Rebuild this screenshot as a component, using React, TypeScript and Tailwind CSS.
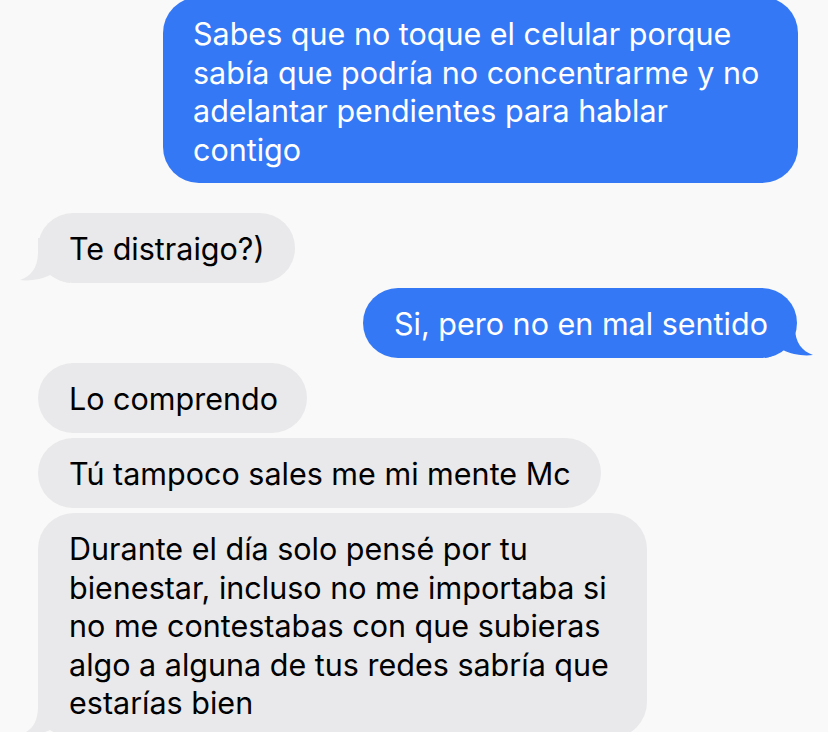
import React from "react";

const font = { fontFamily: "Inter, 'Noto Sans', sans-serif" };

function TailLeft({ color }: { color: string }) {
  return (
    <svg
      className="absolute left-[-18px] bottom-0"
      width="50"
      height="45"
      viewBox="0 0 50 45"
      aria-hidden="true"
    >
      <path
        d="M18 0 L18 14 C18 30 11 38 0 42 C10 43.5 22 41 30 37 C36 41 42 44 50 45 L50 0 Z"
        fill={color}
      />
    </svg>
  );
}

function TailRight({ color }: { color: string }) {
  return (
    <svg
      className="absolute right-[-16px] bottom-0"
      width="48"
      height="45"
      viewBox="0 0 48 45"
      aria-hidden="true"
    >
      <path
        d="M30 0 L30 14 C30 30 37 38 48 42 C38 43.5 26 41 18 37 C12 41 6 44 0 45 L0 0 Z"
        fill={color}
      />
    </svg>
  );
}

export default function App() {
  return (
    <div
      className="w-[828px] h-[732px] overflow-hidden bg-[#f9f9f9] text-[30.5px] leading-[38.5px]"
      style={font}
    >
      <div className="flex flex-col -mt-[3px]">
        {/* Blue multi-line */}
        <div className="flex justify-end pr-[30px]">
          <div className="relative w-[635px] rounded-[36px] bg-[#3478f6] pt-[18px] pb-[14px] pl-[30px] pr-[20px] text-white">
            Sabes que no toque el celular porque
            <br />
            sabía que podría no concentrarme y no
            <br />
            adelantar pendientes para hablar
            <br />
            contigo
          </div>
        </div>

        {/* Gray Te distraigo */}
        <div className="mt-[30px] flex pl-[38px]">
          <div className="relative w-[257px] rounded-[35px] bg-[#e9e9eb] pt-[17px] pb-[15px] pl-[31px] leading-[38px] text-black whitespace-nowrap">
            <TailLeft color="#e9e9eb" />
            <span className="relative">Te distraigo?)</span>
          </div>
        </div>

        {/* Blue single */}
        <div className="mt-[5px] flex justify-end pr-[31px]">
          <div className="relative w-[434px] rounded-[35px] bg-[#3478f6] pt-[17px] pb-[15px] pl-[31px] leading-[38px] text-white whitespace-nowrap">
            <TailRight color="#3478f6" />
            <span className="relative">Si, pero no en mal sentido</span>
          </div>
        </div>

        {/* Gray group */}
        <div className="mt-[5px] flex flex-col items-start gap-[5px] pl-[38px]">
          <div className="w-[269px] rounded-[35px] bg-[#e9e9eb] pt-[17px] pb-[15px] pl-[31px] leading-[38px] text-black whitespace-nowrap">
            Lo comprendo
          </div>
          <div className="w-[563px] rounded-[35px] bg-[#e9e9eb] pt-[17px] pb-[15px] pl-[31px] leading-[38px] text-black whitespace-nowrap">
            Tú tampoco sales me mi mente Mc
          </div>
          <div className="relative w-[609px] rounded-[36px] bg-[#e9e9eb] pt-[17px] pb-[15px] pl-[31px] text-black whitespace-nowrap">
            <TailLeft color="#e9e9eb" />
            <span className="relative">
              Durante el día solo pensé por tu
              <br />
              bienestar, incluso no me importaba si
              <br />
              no me contestabas con que subieras
              <br />
              algo a alguna de tus redes sabría que
              <br />
              estarías bien
            </span>
          </div>
        </div>
      </div>
    </div>
  );
}
